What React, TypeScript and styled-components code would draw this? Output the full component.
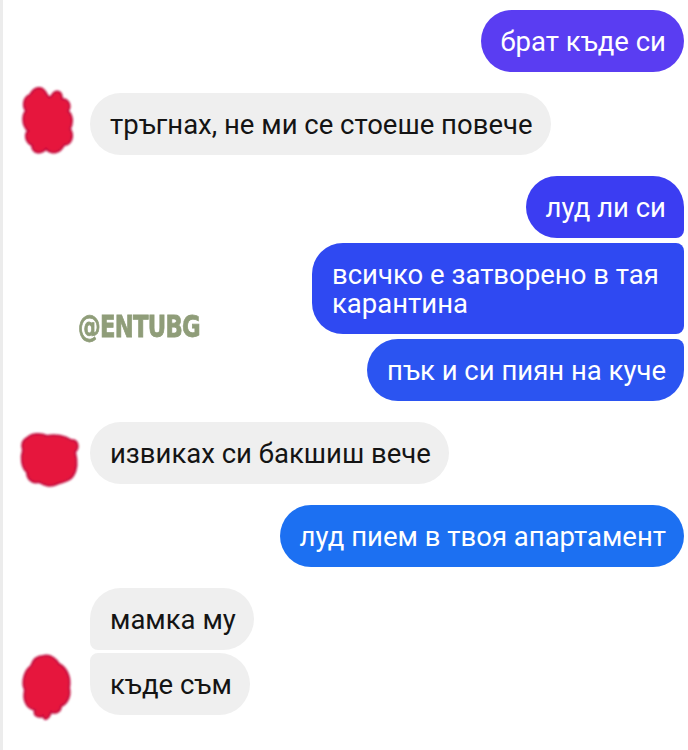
import { createGlobalStyle, styled, css } from 'styled-components';

const GlobalStyle = createGlobalStyle`
  html, body {
    margin: 0;
    padding: 0;
    background: #ffffff;
  }
  body {
    font-family: Roboto, 'Noto Sans', 'DejaVu Sans', sans-serif;
  }
`;

const Screen = styled.div`
  position: relative;
  box-sizing: border-box;
  width: 688px;
  height: 750px;
  overflow: hidden;
  background: #ffffff;
  border-left: 3px solid #ececec;
  padding: 10px 4px 0 0;
  display: flex;
  flex-direction: column;
  gap: 21px;
`;

const SentGroup = styled.div`
  display: flex;
  flex-direction: column;
  align-items: flex-end;
  gap: 5px;
`;

const ReceivedGroup = styled.div`
  display: flex;
  align-items: flex-end;
`;

const AvatarSlot = styled.div`
  width: 87px;
  height: 0;
  flex-shrink: 0;
  align-self: flex-end;
  position: relative;
`;

const ReceivedStack = styled.div`
  display: flex;
  flex-direction: column;
  align-items: flex-start;
  gap: 3px;
`;

type Pos = 'single' | 'first' | 'middle' | 'last';

const radius = (side: 'left' | 'right', pos: Pos) => {
  const big = '31px';
  const small = '8px';
  const top = pos === 'single' || pos === 'first' ? big : small;
  const bottom = pos === 'single' || pos === 'last' ? big : small;
  return side === 'right'
    ? css`border-radius: ${big} ${top} ${bottom} ${big};`
    : css`border-radius: ${top} ${big} ${big} ${bottom};`;
};

const Bubble = styled.div<{ $side: 'left' | 'right'; $pos?: Pos; $color?: string; $wide?: boolean }>`
  box-sizing: border-box;
  max-width: ${(p) => (p.$wide ? '372px' : 'none')};
  padding: 17px 18px 16px 20px;
  font-size: 27.5px;
  line-height: 29px;
  white-space: ${(p) => (p.$wide ? 'normal' : 'nowrap')};
  color: ${(p) => (p.$side === 'right' ? '#ffffff' : '#141414')};
  background: ${(p) => (p.$side === 'right' ? p.$color ?? '#2f4cf2' : '#efefef')};
  ${(p) => radius(p.$side, p.$pos ?? 'single')}
`;

const Watermark = styled.div`
  position: absolute;
  left: 75px;
  top: 308px;
  font-family: 'DejaVu Sans Condensed', 'Liberation Sans', sans-serif;
  font-weight: 700;
  font-size: 28px;
  letter-spacing: -0.8px;
  color: #8f9d79;
  -webkit-text-stroke: 0.7px #8f9d79;
  transform: scale(0.9, 1.1);
  transform-origin: left top;
`;

const BlobSvg = styled.svg<{ $left: number; $drop: number }>`
  position: absolute;
  left: ${(p) => p.$left}px;
  bottom: ${(p) => -p.$drop}px;
  display: block;
  overflow: visible;
`;

type BlobProps = { w: number; h: number; d: string; left: number; drop: number };

const Blob = ({ w, h, d, left, drop }: BlobProps) => (
  <BlobSvg width={w} height={h} viewBox={`0 0 ${w} ${h}`} $left={left} $drop={drop}>
    <defs>
      <filter id="soft" x="-20%" y="-20%" width="140%" height="140%">
        <feGaussianBlur stdDeviation="0.8" />
      </filter>
    </defs>
    <path d={d} fill="#e6123c" stroke="#c10f3c" strokeWidth="2" filter="url(#soft)" />
  </BlobSvg>
);

const blobA =
  'M12 10 C16 2 24 0 28 8 C30 12 32 14 34 10 C38 4 44 6 44 14 C50 14 54 20 50 26 C56 32 54 40 52 44 C56 50 54 60 46 60 C42 68 34 70 28 64 C22 70 14 68 14 60 C8 58 6 50 10 46 C4 40 4 30 8 26 C4 20 6 12 12 10 Z';
const blobB =
  'M10 6 C16 0 26 2 30 4 C38 2 48 4 54 8 C62 8 62 16 58 20 C60 28 60 38 56 44 C52 50 44 50 40 52 C32 56 26 52 22 50 C14 52 10 46 10 40 C4 36 4 24 6 18 C4 12 6 8 10 6 Z';
const blobC =
  'M22 2 C30 0 36 6 38 10 C46 14 50 24 48 34 C50 42 46 50 40 52 C40 58 34 60 30 58 C28 64 24 68 22 62 C18 64 12 62 14 56 C4 54 2 44 4 36 C0 28 4 16 10 12 C12 6 16 2 22 2 Z';

export default function App() {
  return (
    <>
      <GlobalStyle />
      <Screen>
        <SentGroup>
          <Bubble $side="right" $color="#5a3df2">брат къде си</Bubble>
        </SentGroup>

        <ReceivedGroup>
          <AvatarSlot>
            <Blob w={58} h={70} d={blobA} left={15} drop={0} />
          </AvatarSlot>
          <ReceivedStack>
            <Bubble $side="left">тръгнах, не ми се стоеше повече</Bubble>
          </ReceivedStack>
        </ReceivedGroup>

        <SentGroup>
          <Bubble $side="right" $pos="first" $color="#3b3df2">луд ли си</Bubble>
          <Bubble $side="right" $pos="middle" $color="#2f49f2" $wide>
            всичко е затворено в тая карантина
          </Bubble>
          <Bubble $side="right" $pos="last" $color="#2b54f1">пък и си пиян на куче</Bubble>
        </SentGroup>

        <ReceivedGroup>
          <AvatarSlot>
            <Blob w={62} h={54} d={blobB} left={14} drop={2} />
          </AvatarSlot>
          <ReceivedStack>
            <Bubble $side="left">извиках си бакшиш вече</Bubble>
          </ReceivedStack>
        </ReceivedGroup>

        <SentGroup>
          <Bubble $side="right" $color="#1c70f2">луд пием в твоя апартамент</Bubble>
        </SentGroup>

        <ReceivedGroup>
          <AvatarSlot>
            <Blob w={50} h={68} d={blobC} left={18} drop={7} />
          </AvatarSlot>
          <ReceivedStack>
            <Bubble $side="left" $pos="first">мамка му</Bubble>
            <Bubble $side="left" $pos="last">къде съм</Bubble>
          </ReceivedStack>
        </ReceivedGroup>

        <Watermark>@ENTUBG</Watermark>
      </Screen>
    </>
  );
}
